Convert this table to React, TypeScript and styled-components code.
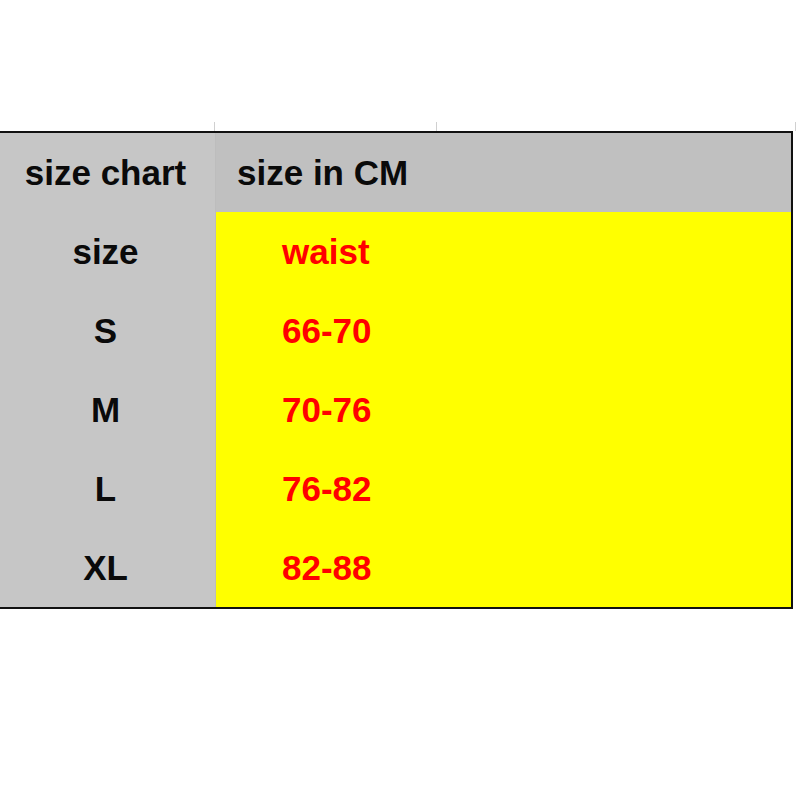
import React from "react";
import styled, { createGlobalStyle } from "styled-components";

const rows = [
  { size: "S", waist: "66-70" },
  { size: "M", waist: "70-76" },
  { size: "L", waist: "76-82" },
  { size: "XL", waist: "82-88" },
];

function App() {
  return (
    <Page>
      <GlobalStyle />
      <StubRow>
        <Stub $width={215} />
        <Stub $width={222} />
        <Stub $width={359} />
      </StubRow>
      <Sheet>
        <LabelCell>size chart</LabelCell>
        <HeadCell>size in CM</HeadCell>
        <LabelCell>size</LabelCell>
        <ValueCell>waist</ValueCell>
        {rows.map((r) => (
          <React.Fragment key={r.size}>
            <LabelCell>{r.size}</LabelCell>
            <ValueCell>{r.waist}</ValueCell>
          </React.Fragment>
        ))}
      </Sheet>
    </Page>
  );
}

const GlobalStyle = createGlobalStyle`
  body {
    margin: 0;
    background: #fff;
    font-family: "Liberation Sans", Arial, sans-serif;
  }
`;

const Page = styled.div`
  padding-top: 122px;
  width: 800px;
  height: 800px;
  box-sizing: border-box;
`;

const StubRow = styled.div`
  display: flex;
  height: 9px;
`;

const Stub = styled.div<{ $width: number }>`
  width: ${(p) => p.$width}px;
  box-sizing: border-box;
  border-right: 1px solid #d0d0d0;
`;

const Sheet = styled.div`
  width: 793px;
  box-sizing: border-box;
  border-top: 2px solid #111;
  border-right: 2px solid #111;
  border-bottom: 2px solid #111;
  display: grid;
  grid-template-columns: 216px 1fr;
  grid-auto-rows: 79px;
`;

const Cell = styled.div`
  display: flex;
  align-items: center;
  font-weight: 700;
  font-size: 35px;
  line-height: 1;
`;

const LabelCell = styled(Cell)`
  background: #c6c6c6;
  color: #0a0a0a;
  justify-content: center;
  padding-right: 4px;
  border-right: 1px solid #bdbdbd;
`;

const HeadCell = styled(Cell)`
  background: #c0c0c0;
  color: #0a0a0a;
  padding-left: 21px;
`;

const ValueCell = styled(Cell)`
  background: #ffff00;
  color: #ff0000;
  padding-left: 66px;
`;

export default App;
